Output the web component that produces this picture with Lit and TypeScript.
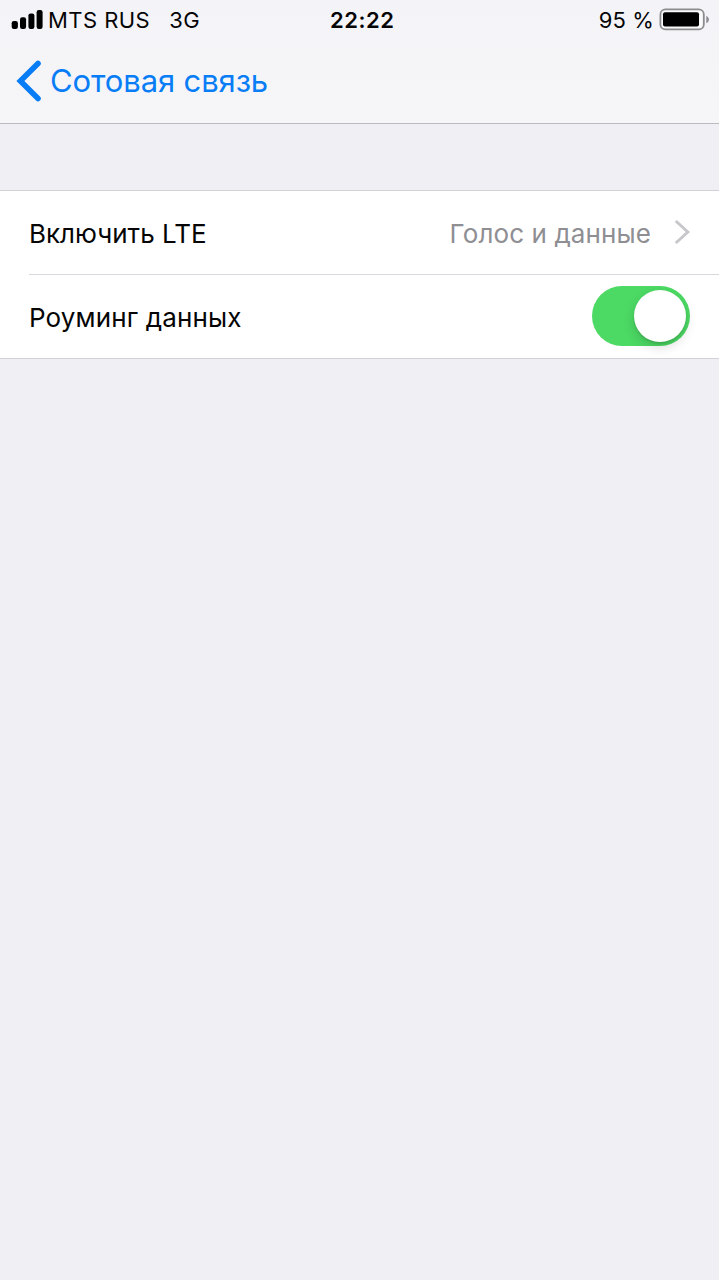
import { LitElement, html, css } from "lit";
import { customElement } from "lit/decorators.js";

@customElement("status-bar")
class StatusBar extends LitElement {
  static styles = css`
    :host { display: grid; grid-template-columns: 330px 1fr auto; height: 40px; padding: 0 9px 0 0; box-sizing: border-box; color: #050506; font-size: 22px; line-height: 40px; white-space: pre; }
    .left, .right { display: flex; align-items: center; }
    .left { padding-left: 11px; }
    .carrier { margin-left: 5px; letter-spacing: 0.45px; }
    .net { margin-left: 19px; letter-spacing: 0.6px; }
    .time { font-weight: 600; letter-spacing: 0.55px; }
    .pct { margin-right: 5px; letter-spacing: 0.1px; }
    svg { display: block; flex: none; }
  `;
  render() {
    return html`
      <div class="left">
        <svg width="32" height="40" viewBox="0 0 32 40" fill="#000">
          <rect x="0.7" y="21" width="6.2" height="8" rx="2.2" />
          <rect x="9" y="17.3" width="6.1" height="11.7" rx="2.2" />
          <rect x="17.4" y="13.4" width="6" height="15.6" rx="2.2" />
          <rect x="25.6" y="10" width="6" height="19" rx="2.2" />
        </svg>
        <span class="carrier">MTS RUS</span><span class="net">3G</span>
      </div>
      <span class="time">22:22</span>
      <div class="right">
        <span class="pct">95 %</span>
        <svg width="51" height="40" viewBox="0 0 51 40">
          <rect x="1.4" y="9.4" width="43.4" height="20" rx="5" fill="#fafafb" stroke="#8c8c8f" stroke-width="1.8" />
          <rect x="4" y="12.3" width="36" height="14.2" rx="2" fill="#000" />
          <path d="M47.3 15.8 Q50 17.2 50 19.5 Q50 21.8 47.3 23.2Z" fill="#8c8c8f" />
        </svg>
      </div>
    `;
  }
}

@customElement("nav-bar")
class NavBar extends LitElement {
  static styles = css`
    :host { display: flex; height: 84px; box-sizing: border-box; border-bottom: 1px solid #bcbbc1; color: #087df6; font-size: 31px; line-height: 82px; padding-left: 16px; }
    svg { display: block; flex: none; }
    .title { margin-left: 8px; letter-spacing: -0.12px; }
  `;
  render() {
    return html`
      <svg width="26" height="82" viewBox="0 0 26 82">
        <path d="M22 23.5 L4.4 41 L22 58.5" fill="none" stroke="#087df6" stroke-width="5.6" stroke-linecap="round" />
      </svg>
      <span class="title">Сотовая связь</span>
    `;
  }
}

@customElement("toggle-switch")
class ToggleSwitch extends LitElement {
  static styles = css`
    :host { display: flex; justify-content: flex-end; box-sizing: border-box; width: 98px; height: 60px; padding: 4px; border-radius: 30px; background: #4cd964; }
    .knob { width: 52px; height: 52px; border-radius: 50%; background: #fff; box-shadow: 0 5px 12px rgba(0,0,0,.15), 0 2px 2px rgba(0,0,0,.1); }
  `;
  render() {
    return html`<div class="knob"></div>`;
  }
}

@customElement("app-root")
class AppRoot extends LitElement {
  static styles = css`
    :host { display: block; width: 719px; height: 1280px; overflow: hidden; background: #efeff4; font-family: Inter, "Liberation Sans", sans-serif; }
    .header { background: linear-gradient(#f4f4f8, #f6f6f8); }
    .group { margin-top: 66px; background: #fff; border-top: 1px solid #d2d1d6; border-bottom: 1px solid #d2d1d6; padding-left: 29px; }
    .row { display: flex; align-items: center; justify-content: space-between; box-sizing: border-box; height: 83px; padding-right: 29px; font-size: 26px; line-height: 32px; color: #050505; }
    .row + .row { height: 84px; border-top: 1px solid #d9d8dc; }
    .value { display: flex; align-items: center; color: #8e8e93; }
    .value svg { display: block; margin-left: 22px; }
    .lte, .voice, .roaming { padding-top: 3px; }
    .voice { letter-spacing: 0.1px; }
    .roaming { letter-spacing: 0.14px; }
    toggle-switch { margin-bottom: 1px; }
  `;
  render() {
    return html`
      <div class="header">
        <status-bar></status-bar>
        <nav-bar></nav-bar>
      </div>
      <div class="group">
        <div class="row">
          <span class="lte">Включить LTE</span>
          <div class="value">
            <span class="voice">Голос и данные</span>
            <svg width="17" height="28" viewBox="0 0 17 28">
              <path d="M2.8 2 L14.8 13 L2.8 24" fill="none" stroke="#c7c7cc" stroke-width="3" />
            </svg>
          </div>
        </div>
        <div class="row">
          <span class="roaming">Роуминг данных</span>
          <toggle-switch></toggle-switch>
        </div>
      </div>
    `;
  }
}
